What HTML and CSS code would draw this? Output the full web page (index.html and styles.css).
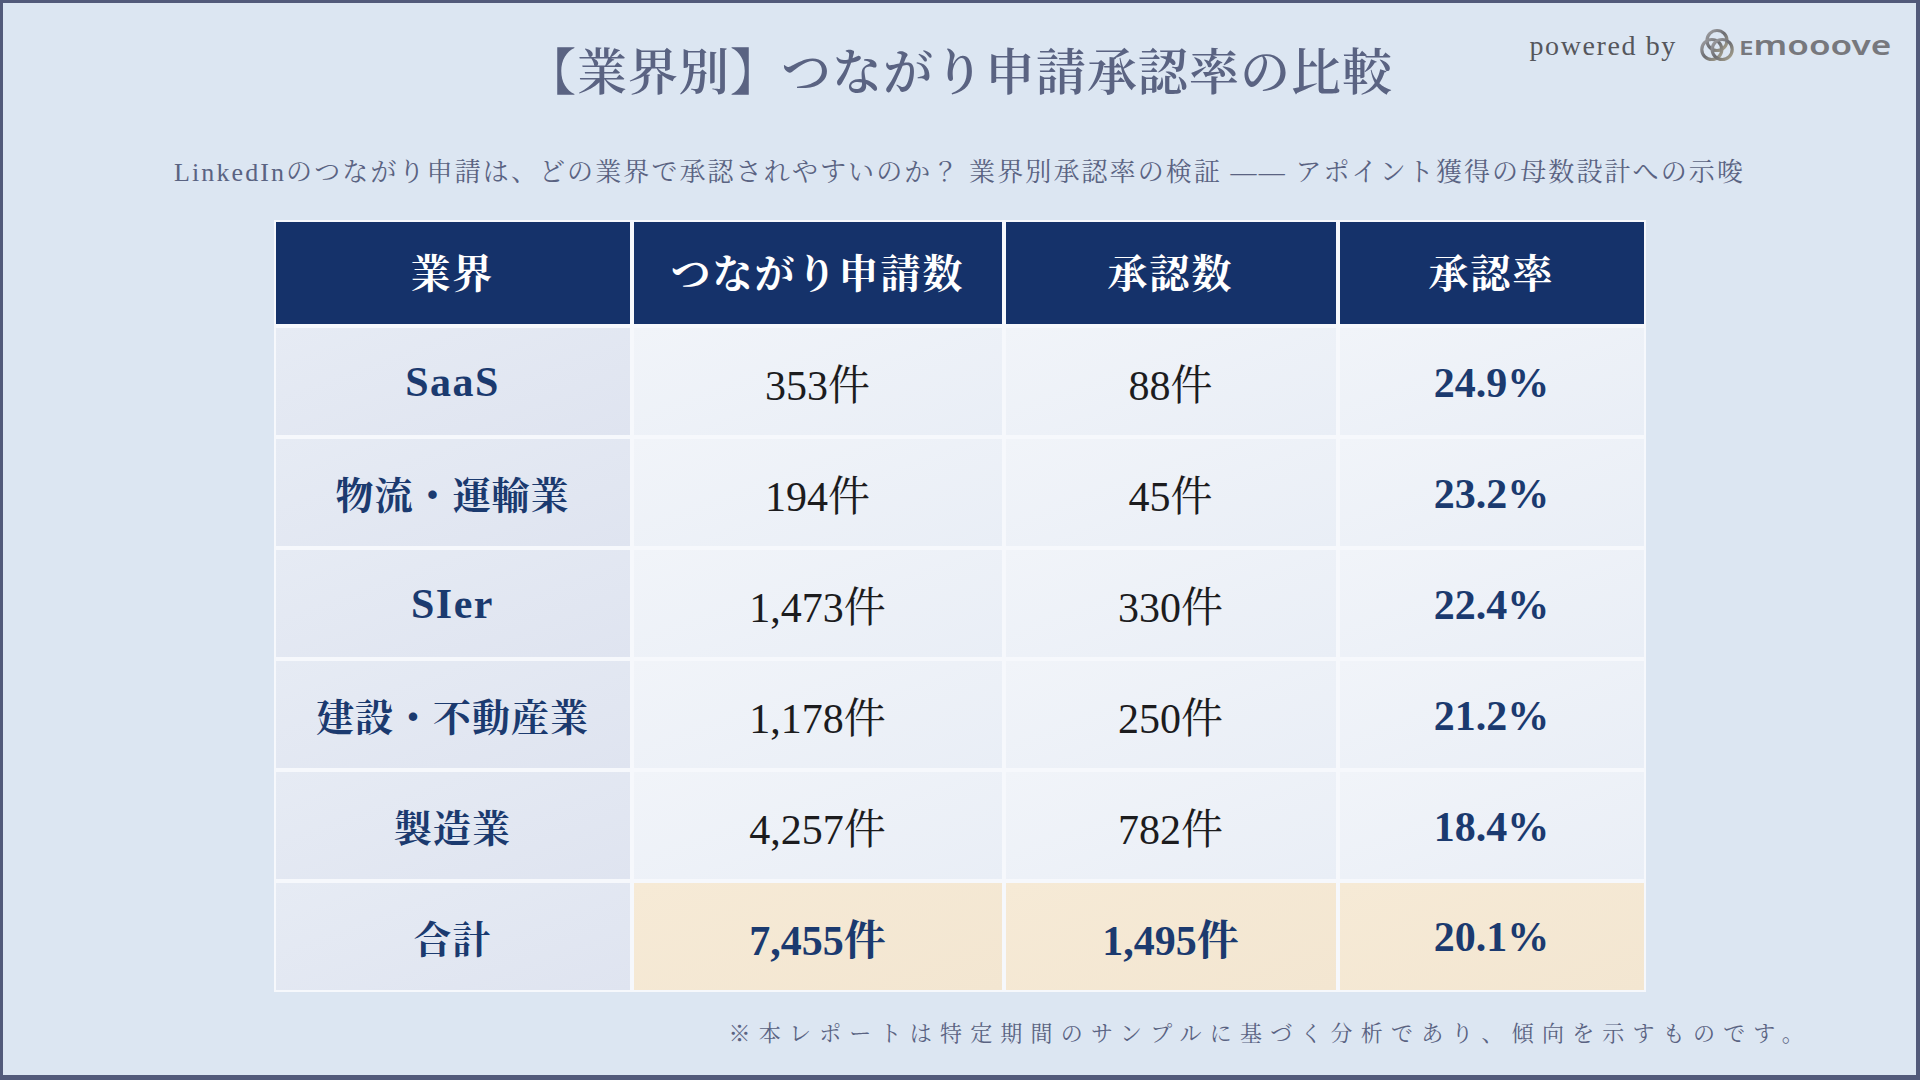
FILE: index.html
```html
<!DOCTYPE html>
<html lang="ja">
<head>
<meta charset="utf-8">
<title>業界別 つながり申請承認率の比較</title>
<link rel="stylesheet" href="styles.css">
</head>
<body>
<div class="slide">
  <header class="top">
    <h1 class="title">【業界別】つながり申請承認率の比較</h1>
    <div class="brand">
      <span class="powered">powered by</span>
      <svg class="ring" viewBox="0 0 40 40" width="40" height="40" aria-hidden="true">
        <defs>
          <linearGradient id="rg" x1="0" y1="0" x2="1" y2="1">
            <stop offset="0" stop-color="#a3a3a6"/>
            <stop offset="0.5" stop-color="#6c6d72"/>
            <stop offset="1" stop-color="#aaa48f"/>
          </linearGradient>
        </defs>
        <g fill="none" stroke="url(#rg)" stroke-width="3.2">
          <circle cx="20" cy="14.5" r="10"/>
          <circle cx="14.8" cy="23.5" r="10"/>
          <circle cx="25.2" cy="23.5" r="10"/>
        </g>
      </svg>
      <span class="logo"><span class="logo-e">E</span>mooove</span>
    </div>
  </header>
  <p class="lead">LinkedInのつながり申請は、どの業界で承認されやすいのか？ 業界別承認率の検証 —— アポイント獲得の母数設計への示唆</p>
  <div class="table">
    <div class="cell head">業界</div>
    <div class="cell head">つながり申請数</div>
    <div class="cell head">承認数</div>
    <div class="cell head">承認率</div>

    <div class="cell label"><span class="latin">SaaS</span></div>
    <div class="cell num">353件</div>
    <div class="cell num">88件</div>
    <div class="cell rate">24.9%</div>

    <div class="cell label">物流・運輸業</div>
    <div class="cell num">194件</div>
    <div class="cell num">45件</div>
    <div class="cell rate">23.2%</div>

    <div class="cell label"><span class="latin">SIer</span></div>
    <div class="cell num">1,473件</div>
    <div class="cell num">330件</div>
    <div class="cell rate">22.4%</div>

    <div class="cell label">建設・不動産業</div>
    <div class="cell num">1,178件</div>
    <div class="cell num">250件</div>
    <div class="cell rate">21.2%</div>

    <div class="cell label">製造業</div>
    <div class="cell num">4,257件</div>
    <div class="cell num">782件</div>
    <div class="cell rate">18.4%</div>

    <div class="cell label">合計</div>
    <div class="cell total">7,455件</div>
    <div class="cell total">1,495件</div>
    <div class="cell total">20.1%</div>
  </div>
  <p class="note">※本レポートは特定期間のサンプルに基づく分析であり、傾向を示すものです。</p>
</div>
</body>
</html>
```

FILE: styles.css
```css
html, body {
  margin: 0;
  padding: 0;
}
body {
  width: 1920px;
  height: 1080px;
  overflow: hidden;
  font-family: "Liberation Serif", "Noto Serif CJK JP", "Noto Sans CJK JP", serif;
}
.slide {
  box-sizing: border-box;
  width: 1920px;
  height: 1080px;
  border-style: solid;
  border-color: #525a7a;
  border-width: 3px 4px 5px 3px;
  background: #dce6f2;
  display: flex;
  flex-direction: column;
  align-items: center;
  position: relative;
}
.top {
  width: 100%;
  display: flex;
  justify-content: center;
  padding-top: 40px;
}
.title {
  margin: 0;
  font-size: 50px;
  line-height: 60px;
  font-weight: 600;
  color: #5a6382;
  letter-spacing: 1px;
}
.brand {
  position: absolute;
  top: 23px;
  right: 26px;
  display: flex;
  align-items: center;
  gap: 6px;
}
.powered {
  font-size: 28px;
  letter-spacing: 1.6px;
  color: #55565c;
  margin-right: 14px;
}
.ring {
  display: block;
}
.logo {
  display: inline-block;
  font-family: "Noto Sans", "DejaVu Sans", sans-serif;
  font-weight: 600;
  font-size: 27px;
  line-height: 30px;
  color: #77787d;
  transform: scaleX(1.3);
  transform-origin: left center;
  margin-right: 34px;
  margin-left: -4px;
}
.logo-e {
  font-size: 20px;
}
.lead {
  margin: 54px 0 0;
  font-size: 26px;
  line-height: 32px;
  color: #5a6382;
  letter-spacing: 2.1px;
}
.table {
  margin-top: 31px;
  display: grid;
  grid-template-columns: 354px 368px 330px 304px;
  grid-template-rows: 102px repeat(6, 107px);
  gap: 4px;
  padding: 2px;
  background: #f6f8fc;
}
.cell {
  display: flex;
  align-items: center;
  justify-content: center;
  font-size: 42px;
  color: #1c1c1e;
}
.head {
  background: #15326a;
  color: #ffffff;
  font-weight: 700;
  font-size: 40px;
  letter-spacing: 2px;
  padding-bottom: 6px;
}
.label {
  background: linear-gradient(160deg, #e6ebf4, #dfe4f0);
  color: #1b3a6f;
  font-weight: 700;
  font-size: 38px;
  letter-spacing: 1px;
}
.latin {
  font-size: 42px;
  letter-spacing: 1.5px;
}
.num {
  background: linear-gradient(160deg, #f1f4f9, #e9eef6);
}
.rate {
  background: linear-gradient(160deg, #f1f4f9, #e9eef6);
  color: #1b3a6f;
  font-weight: 700;
  padding-top: 3px;
}
.total {
  background: linear-gradient(160deg, #f6ead6, #f3e6d1);
  color: #1b3a6f;
  font-weight: 700;
}
.note {
  align-self: flex-end;
  margin: 28px 104px 0 0;
  font-size: 22px;
  line-height: 28px;
  letter-spacing: 8.2px;
  color: #5a6382;
}
```
